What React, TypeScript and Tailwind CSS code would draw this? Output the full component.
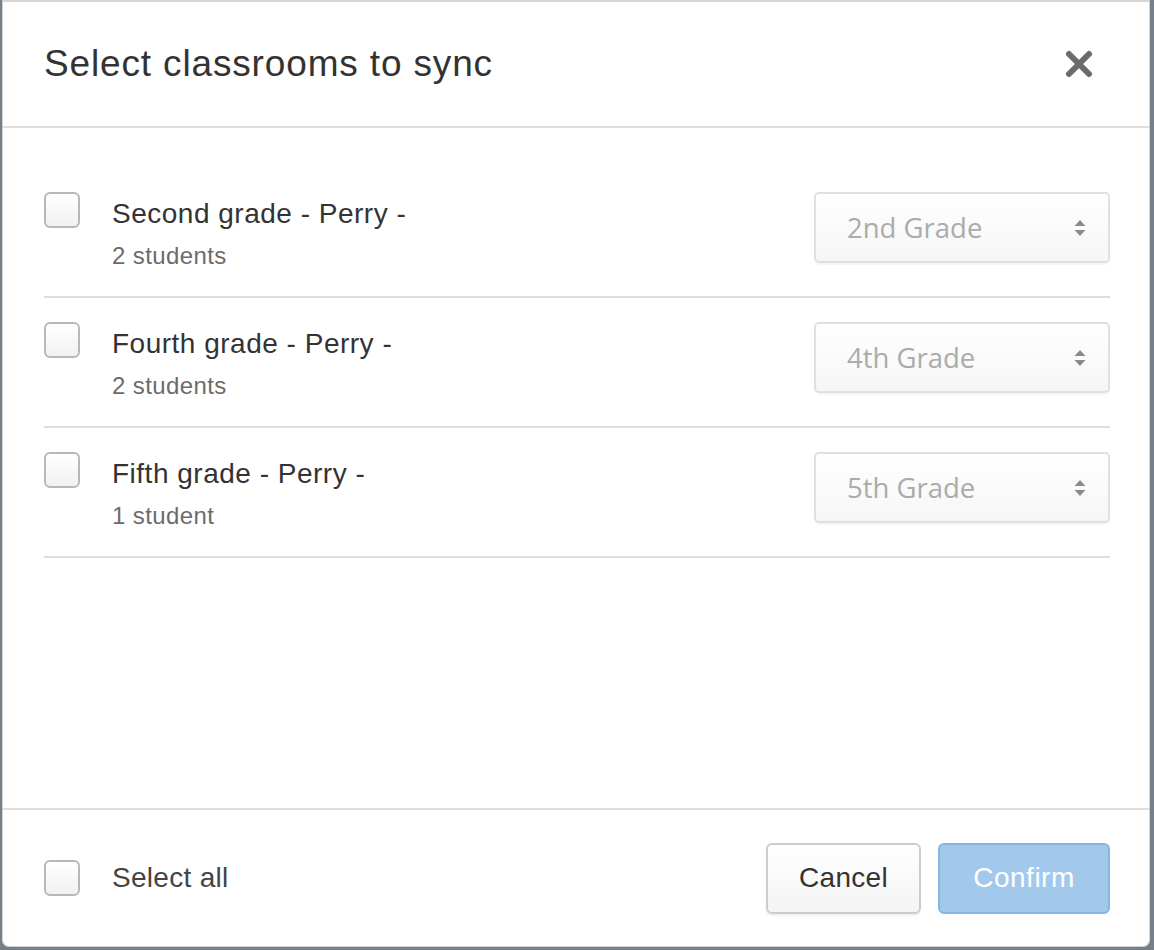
import React from "react";

const classrooms = [
  { name: "Second grade - Perry -", count: "2 students", grade: "2nd Grade" },
  { name: "Fourth grade - Perry -", count: "2 students", grade: "4th Grade" },
  { name: "Fifth grade - Perry -", count: "1 student", grade: "5th Grade" },
];

function Checkbox() {
  return (
    <span className="block h-[36px] w-[36px] shrink-0 rounded-[6px] border-2 border-[#b8b8b8] bg-gradient-to-b from-white to-[#f1f1f1]" />
  );
}

function GradeSelect({ value }: { value: string }) {
  return (
    <div className="flex h-[71px] w-[296px] items-center justify-between rounded-[5px] border-2 border-[#e0e0e0] bg-gradient-to-b from-white to-[#f6f6f6] pl-[31px] pr-[22px] shadow-[0_2px_1px_rgba(0,0,0,0.04)]">
      <span className="font-['Open_Sans',sans-serif] text-[27.5px] text-[#ababab]">{value}</span>
      <svg width="12" height="18" viewBox="0 0 12 18" className="text-[#8a8a8a]">
        <path d="M6 1 L11.5 7 H0.5 Z" fill="currentColor" />
        <path d="M6 17 L11.5 11 H0.5 Z" fill="currentColor" />
      </svg>
    </div>
  );
}

export default function App() {
  return (
    <div className="h-[950px] w-[1154px] bg-[#76808a] pl-[2px] pr-[4px] pb-[3px] font-['Liberation_Sans',Arial,sans-serif]">
      <div className="flex h-full flex-col rounded-b-[7px] border border-t-2 border-[#d5d5d5] bg-white">
        <header className="flex h-[126px] shrink-0 items-center justify-between border-b-2 border-[#dedede] pl-[41px] pr-[56px]">
          <h2 className="text-[37px] tracking-[0.85px] text-[#333]">Select classrooms to sync</h2>
          <button type="button" className="text-[#6b6b6b]" aria-label="Close">
            <svg width="28" height="28" viewBox="0 0 28 28">
              <path d="M4 4 L24 24 M24 4 L4 24" stroke="currentColor" strokeWidth="6" strokeLinecap="round" />
            </svg>
          </button>
        </header>

        <div className="flex-1 pl-[41px] pr-[39px] pt-[40px]">
          {classrooms.map((c) => (
            <div key={c.name} className="flex items-start justify-between border-b-2 border-[#dedede] pt-[24px] pb-[29px]">
              <div className="flex items-start gap-[32px]">
                <Checkbox />
                <div className="h-[75px]">
                  <div className="mt-[8px] text-[28px] leading-[28px] tracking-[0.5px] text-[#333]">{c.name}</div>
                  <div className="mt-[16px] text-[24px] leading-[23px] tracking-[0.4px] text-[#6b6b6b]">{c.count}</div>
                </div>
              </div>
              <GradeSelect value={c.grade} />
            </div>
          ))}
        </div>

        <footer className="flex h-[138px] shrink-0 items-center justify-between border-t-2 border-[#dedede] pl-[41px] pr-[39px]">
          <div className="flex items-center gap-[32px]">
            <Checkbox />
            <span className="text-[28px] tracking-[0.3px] text-[#444]">Select all</span>
          </div>
          <div className="flex items-center gap-[17px]">
            <button
              type="button"
              className="h-[71px] w-[155px] rounded-[6px] border-2 border-[#cccccc] bg-gradient-to-b from-white to-[#f4f4f4] text-[28px] tracking-[0.3px] text-[#333] shadow-[0_2px_2px_rgba(0,0,0,0.06)]"
            >
              Cancel
            </button>
            <button
              type="button"
              className="h-[71px] w-[172px] rounded-[6px] border-2 border-[#85b6e3] bg-[#a2c9ec] text-[28px] tracking-[0.5px] text-white"
            >
              Confirm
            </button>
          </div>
        </footer>
      </div>
    </div>
  );
}
